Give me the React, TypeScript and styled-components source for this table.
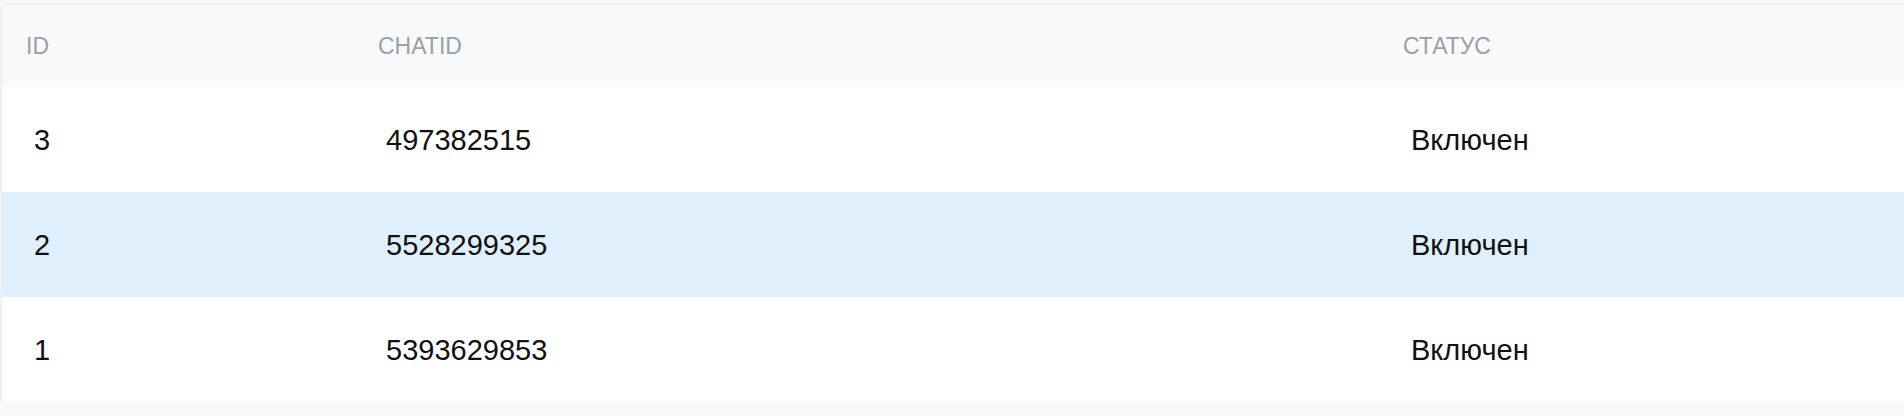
import React from 'react'
import styled, { createGlobalStyle } from 'styled-components'

const GlobalStyle = createGlobalStyle`
  html, body {
    margin: 0;
    padding: 0;
    background: #f7f8fa;
    font-family: "Liberation Sans", Arial, sans-serif;
  }
`

const Page = styled.div`
  padding: 4px 0 0 2px;
  width: 1902px;
`

const Table = styled.div`
  background: #fff;
  box-shadow: 0 1px 3px rgba(0, 0, 0, 0.12);
  border-top: 1px solid #eef0f3;
`

const Row = styled.div<{ $highlight?: boolean }>`
  display: grid;
  grid-template-columns: 352px 1025px 1fr;
  align-items: center;
  height: 105px;
  background: ${p => (p.$highlight ? '#dff0fc' : '#fff')};
`

const HeaderRow = styled(Row)`
  height: 82px;
  background: #f8f9fb;
`

const HeadCell = styled.div`
  padding-left: 24px;
  font-size: 23px;
  color: #9aa0a6;
  text-transform: uppercase;
`

const Cell = styled.div`
  padding-left: 32px;
  padding-top: 2px;
  font-size: 29px;
  color: #111;
`

const rows = [
  { id: 3, chatId: '497382515', status: 'Включен' },
  { id: 2, chatId: '5528299325', status: 'Включен' },
  { id: 1, chatId: '5393629853', status: 'Включен' },
]

export default function App() {
  return <Page>
    <GlobalStyle />
    <Table>
      <HeaderRow>
        <HeadCell>ID</HeadCell>
        <HeadCell>ChatId</HeadCell>
        <HeadCell>Статус</HeadCell>
      </HeaderRow>
      {rows.map((r, i) =>
        <Row key={r.id} $highlight={i === 1}>
          <Cell>{r.id}</Cell>
          <Cell>{r.chatId}</Cell>
          <Cell>{r.status}</Cell>
        </Row>
      )}
    </Table>
  </Page>
}
